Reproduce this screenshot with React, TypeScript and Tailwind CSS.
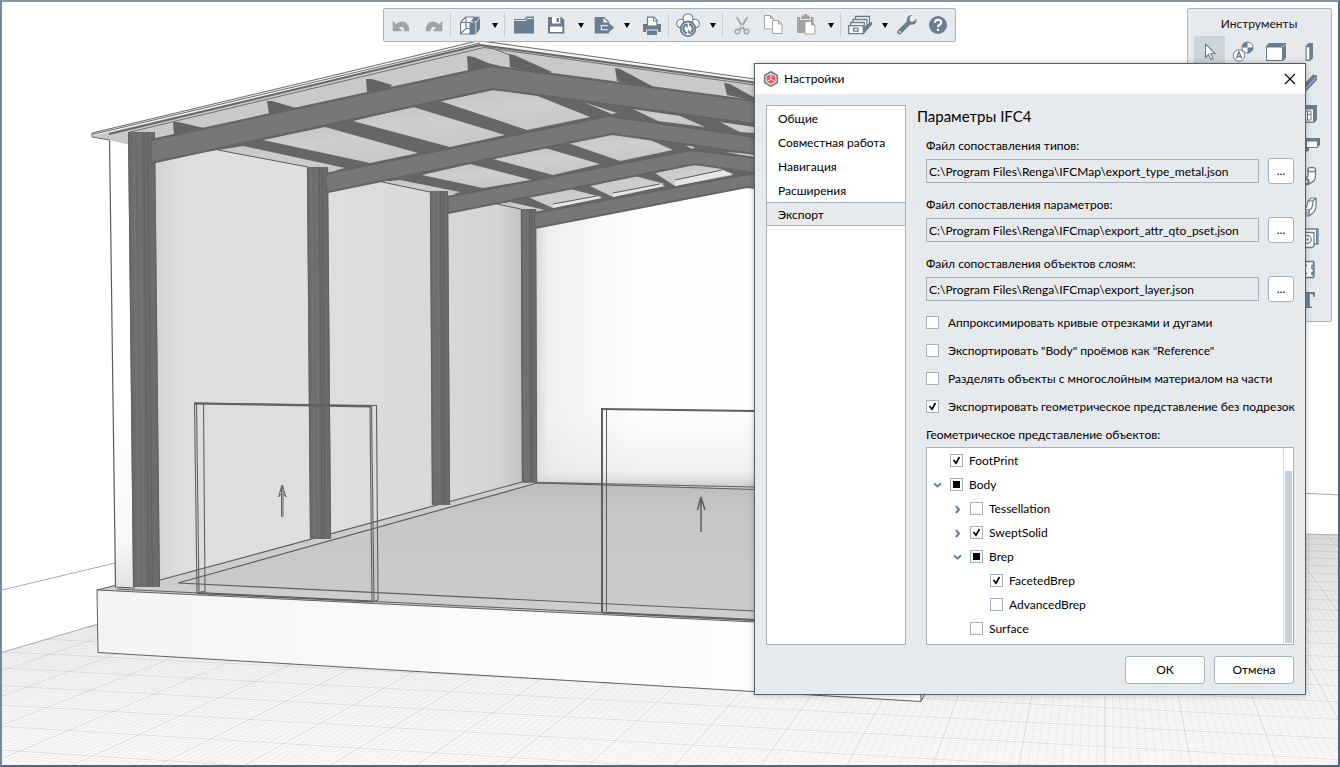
import { useEffect, useRef, useState } from "react";
import type { ReactNode } from "react";

const BLUE = "#697d90";
const GRAY = "#a3a3a3";

/* ---------- 3D viewport ---------- */

const line = (x1: number, y1: number, x2: number, y2: number) => `M${x1} ${y1}L${x2} ${y2}`;

function gridPaths() {
  let minor = "";
  let major = "";
  for (let k = -240; k <= 60; k++) {
    const seg = line(1105, 290, 1105 + k * 8.6 * 1.2, 860);
    if (k % 10 === 0) major += seg;
    else minor += seg;
  }
  for (let n = -30; n <= 235; n++) {
    const y0 = 290 + 1 / (0.002174 + n * 0.0000118);
    const slope = (y0 - 290) / 7155;
    const seg = line(0, y0, 1340, y0 + slope * 1340);
    if (n % 10 === 0) major += seg;
    else minor += seg;
  }
  return { minor, major };
}

const ROOF_PANELS = [
  "218,150 243,146 345,168 328,172 327,167 308,167",
  "263,140 325,127 418,153 370,163",
  "353,121 413,107 505,135 450,147",
  "440,101 493,90 535,95 590,117 527,130",
  "583,102 617,113 612,114",
  "633,109 680,116 705,127 658,121",
  "720,122 754,127 754,133 740,132",
  "382,182 400,180 460,192 450,195 447,192 430,192",
  "422,175 470,164 532,180 483,188",
  "493,159 545,148 600,164 553,175",
  "568,143 612,134 648,139 673,150 620,161",
  "685,145 695,147 692,149",
  "725,152 754,154 754,157 748,156",
  "497,204 510,202 545,210 536,213 534,209 520,209",
  "528,197 570,189 602,197 553,208",
  "590,186 635,176 665,184 613,197",
  "655,173 693,165 717,167 733,175 675,186",
];

const SKYLIGHTS = [
  "553,204 597,196 602,198 553,208",
  "613,193 660,184 665,186 613,197",
  "675,180 722,170 733,174 675,186",
];

const PURLIN_ENDS = [
  "173,122 178,122 204,128 200,133 174,135",
  "267,101 272,101 296,108 290,112 269,114",
  "366,79 372,79 392,85 388,90 367,92",
  "467,56 474,57 488,63 500,66 486,70 468,70",
  "509,54 514,55 552,72 546,74 510,67",
  "615,68 620,69 652,86 646,88 617,81",
  "724,83 730,84 755,98 755,101 727,95",
];

const FRAMES = [
  { shape: "534,213 755,173 755,188 747,187 535,228", top: "534,213 755,173", bottom: "535,228 747,187 755,188" },
  { shape: "447,197 692,150 755,158 755,173 695,164 448,213", top: "447,197 692,150 755,158", bottom: "448,213 695,164 755,173" },
  { shape: "325,174 608,116 755,137 755,154 612,134 328,192", top: "325,174 608,116 755,137", bottom: "328,192 612,134 755,154" },
  { shape: "151,140 492,66 755,101 755,124 493,89 151,163", top: "151,140 492,66 755,101", bottom: "151,163 493,89 755,124" },
];

function Column({ top, left, right, bottom, bl, br }: { top: number; left: number; right: number; bottom: number; bl: number; br: number }) {
  const at = (t: number) => [left + (right - left) * t, bl + (br - bl) * t];
  return (
    <g>
      <polygon points={`${left},${top} ${right},${top} ${br},${bottom} ${bl},${bottom}`} fill="#6c6c6c" />
      {[0.22, 0.42].map((t) => {
        const [a, b] = at(t);
        return <path key={t} d={line(a, top + 2, b, bottom - 3)} stroke="#737373" strokeWidth={2} />;
      })}
      {[0.02, 0.58, 0.72, 0.98].map((t) => {
        const [a, b] = at(t);
        return <path key={t} d={line(a, top, b, bottom)} stroke="#606060" strokeWidth={1} />;
      })}
    </g>
  );
}

function Scene() {
  const { minor, major } = gridPaths();
  return (
    <svg className="absolute -top-0.5 -left-0.5" width="1340" height="767" viewBox="0 0 1340 767" fill="none" aria-hidden="true">
      <defs>
        <clipPath id="ground"><polygon points="0,653 400,535 1340,535 1340,767 0,767" /></clipPath>
        <linearGradient id="groundFill" x1="0" y1="535" x2="0" y2="767" gradientUnits="userSpaceOnUse">
          <stop offset="0" stopColor="#ececec" /><stop offset="0.5" stopColor="#f7f7f7" /><stop offset="1" stopColor="#fcfcfc" />
        </linearGradient>
        <linearGradient id="sideWall" x1="157" y1="0" x2="530" y2="0" gradientUnits="userSpaceOnUse">
          <stop offset="0" stopColor="#d4d4d4" /><stop offset="0.06" stopColor="#dedede" /><stop offset="0.4" stopColor="#dfdfdf" />
          <stop offset="0.75" stopColor="#d9d9d9" /><stop offset="0.92" stopColor="#d3d3d3" /><stop offset="1" stopColor="#bcbcbc" />
        </linearGradient>
        <linearGradient id="backWall" x1="536" y1="0" x2="640" y2="0" gradientUnits="userSpaceOnUse">
          <stop offset="0" stopColor="#d8d8d8" /><stop offset="0.12" stopColor="#f1f1f1" /><stop offset="1" stopColor="#fefefe" />
        </linearGradient>
        <linearGradient id="backShade" x1="0" y1="410" x2="0" y2="487" gradientUnits="userSpaceOnUse">
          <stop offset="0" stopColor="#e8e8e8" stopOpacity="0" /><stop offset="0.8" stopColor="#e2e2e2" stopOpacity="0.5" /><stop offset="1" stopColor="#cccccc" />
        </linearGradient>
        <linearGradient id="floor" x1="0" y1="483" x2="0" y2="620" gradientUnits="userSpaceOnUse">
          <stop offset="0" stopColor="#bdbdbd" /><stop offset="0.25" stopColor="#c7c7c7" /><stop offset="1" stopColor="#cbcbcb" />
        </linearGradient>
        <linearGradient id="slab" x1="97" y1="0" x2="755" y2="0" gradientUnits="userSpaceOnUse">
          <stop offset="0" stopColor="#f4f4f4" /><stop offset="0.6" stopColor="#fbfbfb" /><stop offset="1" stopColor="#fdfdfd" />
        </linearGradient>
        <linearGradient id="pier" x1="0" y1="400" x2="0" y2="588" gradientUnits="userSpaceOnUse">
          <stop offset="0" stopColor="#ffffff" /><stop offset="0.75" stopColor="#f8f8f8" /><stop offset="1" stopColor="#e2e2e2" />
        </linearGradient>
        <linearGradient id="panel" x1="0" y1="0" x2="0.3" y2="1">
          <stop offset="0" stopColor="#c4c4c4" /><stop offset="0.5" stopColor="#cecece" /><stop offset="1" stopColor="#c8c8c8" />
        </linearGradient>
      </defs>

      <rect width="1340" height="767" fill="#fff" />
      <polygon points="0,653 400,535 1340,535 1340,767 0,767" fill="url(#groundFill)" />
      <g clipPath="url(#ground)">
        <path d={minor} stroke="#000" strokeOpacity="0.045" />
        <path d={major} stroke="#000" strokeOpacity="0.11" />
      </g>
      <path d="M0 590.5L115 563M0 653L98 624M1300 493L1340 495M1300 534L1340 535" stroke="#a8a8a8" />

      <polygon points="534,228 755,186 755,490 533,484" fill="url(#backWall)" />
      <polygon points="534,410 755,410 755,490 533,484" fill="url(#backShade)" />
      <polygon points="155,150 218,149 536,209 534,484 160,582" fill="url(#sideWall)" />
      <polygon points="97,590 115,585 162,579 522,482 755,487 755,622" fill="#cdcdcd" />
      <polygon points="178,583 537,483 755,489 755,611" fill="url(#floor)" />
      <path d="M160 580L522 482L755 487M178 583L537 483L755 489.500M178 583L755 611" stroke="#5f5f5f" strokeWidth="1.200" />

      <polygon points="97,590 755,622 921,630 921,701 98,652" fill="url(#slab)" />
      <path d="M97 590L755 622M117 589L755 620M97 590L98 652.500L921 701.500L926 692M97 590L117 585M921 690V701" stroke="#606060" />
      <polygon points="109,138 130,132 134,588 115,587" fill="url(#pier)" />
      <path d="M109.500 138L115.500 587L135 588" stroke="#5c5c5c" strokeWidth="1.200" />

      <polygon points="92,134 480,44 755,82 755,110 492,75 151,150 109,140 92,137" fill="#c9c9c9" />
      <polygon points="151,160 492,84 755,120 755,180 534,222 534,209 448,193 328,169 218,150" fill="#666" />
      {ROOF_PANELS.map((p) => <polygon key={p} points={p} fill="url(#panel)" />)}
      {SKYLIGHTS.map((p) => <polygon key={p} points={p} fill="#e6e6e6" />)}
      <path d="M218 150L308 167M382 182L430 192M497 204L521 209M553 204L597 196M613 193L660 184M675 180L722 170" stroke="#5c5c5c" />

      <polygon points="92,133 475,42 485,42 755,79 755,83 482,45 92,136" fill="#f4f4f4" />
      <path d="M92 133L475 41.500H485L755 79M92 134.500L480 43" stroke="#6b6b6b" />
      <path d="M109 134L480 45L755 82.500" stroke="#666" strokeWidth="2" />
      <path d="M130 132L484 47.500L755 85M486 46L510 55" stroke="#6e6e6e" />
      <path d="M92 133V137L109 140" stroke="#6b6b6b" />

      {PURLIN_ENDS.map((p) => <polygon key={p} points={p} fill="#636363" />)}
      <Column top={209} left={521} right={536} bottom={482} bl={522} br={537} />
      <Column top={191} left={430} right={448} bottom={505} bl={432} br={450} />
      <Column top={167} left={307} right={328} bottom={539} bl={310} br={331} />
      <Column top={132} left={128} right={155} bottom={587} bl={133} br={160} />
      {FRAMES.map((f) => (
        <g key={f.shape}>
          <polygon points={f.shape} fill="#777" />
          <polyline points={f.top} stroke="#646464" strokeWidth="2" />
          <polyline points={f.bottom} stroke="#646464" strokeWidth="2" />
        </g>
      ))}
      <path d="M151 140V163M326 174V192M448 197V213M534.500 213V228" stroke="#5e5e5e" />

      <g stroke="#5f5f5f">
        <path d="M194.500 403L197 593M196.500 403L199 593M203.500 404L205 592M370 406L372 602M371.500 406L374 602M376.500 405L378 600M194 403L377 405.500" strokeWidth="1.100" />
        <path d="M194 403.500L371 406.500M197 593L373 601.500" strokeWidth="2" />
        <path d="M197 593L205 591M372 602L378 600" />
        <path d="M602 409V613" strokeWidth="2" />
        <path d="M606.500 409V611" />
        <path d="M601 409L755 411" strokeWidth="2" />
        <path d="M602 612.500L755 620" strokeWidth="2" />
        <path d="M281.500 486V517M283 486V517M282 485L278.500 497L281 494M282 485L286 497L283.500 494" />
        <path d="M701 532V497L697.500 510M701 497L705 510" strokeWidth="1.500" />
      </g>
    </svg>
  );
}

/* ---------- Icons ---------- */

function Icon({ children }: { children: ReactNode }) {
  return <svg width="24" height="24" viewBox="0 0 24 24" fill="none" aria-hidden="true">{children}</svg>;
}

const undoIcon = <Icon><path fill={GRAY} d="M2.700 8L6 11.200C11 6.500 19.300 7 19.300 18.300h-5c.3-4.500-2.800-5.600-5.300-3.600l3.300 3.600H2.700z" /></Icon>;
const redoIcon = <Icon><path fill={GRAY} d="M20.300 8L17 11.200C12 6.500 3.700 7 3.700 18.300h5c-.3-4.500 2.800-5.600 5.300-3.600l-3.300 3.600h9.600z" /></Icon>;
const boxIcon = (
  <Icon>
    <path fill="#fff" stroke={BLUE} strokeWidth="1.200" d="M2.600 9.500l5-5.500h8v12l-4 5h-9z" />
    <path stroke={BLUE} strokeWidth="1.200" d="M2.600 9.500h10M8 4v11.500M2.600 20.500l5.400-5h4" />
    <path fill={BLUE} d="M11.500 9.500h6V21.500h-6zM18.300 9.300L22 5v11l-3.700 5zM12.500 8.500l4-4.700h5.500l-3.800 4.700z" />
  </Icon>
);
const folderIcon = <Icon><path fill={BLUE} d="M2 6h10l2.500-2.500H22V20.500H2z" /><path stroke="#e6eaed" d="M2.500 7.500h10.500l2.500-2H21" /></Icon>;
const saveIcon = (
  <Icon>
    <path fill={BLUE} d="M4 4h13.500L20.300 7v13.500H4z" /><path fill="#fff" d="M8 4h8.300v6.500H8zM6 13.500h12.300v5.500H6z" /><path fill={BLUE} d="M12.500 5H15v4h-2.500z" />
  </Icon>
);
const exportIcon = (
  <Icon>
    <path fill={BLUE} d="M2.700 4h9.500l5 5v3.500H8.800v4.200H17v3.800H2.700z" /><path fill="#fff" d="M11.500 5v4.500H16z" />
    <path fill={BLUE} d="M10 13.300h6.500V9.800l5.700 4.800-5.700 4.900v-3.500H10z" />
    <path stroke="#e6eaed" d="M8.500 12.400h7.300M8.500 16.800h7.300" />
  </Icon>
);
const printIcon = (
  <Icon>
    <path fill={BLUE} d="M3 11h18v8H3zM7 17h10v5H7z" />
    <path fill="#fff" stroke={BLUE} strokeWidth="1.200" d="M7.500 4.200h6.500l3 3v5.800h-9.500z" />
    <path stroke={BLUE} d="M13.500 4.500v3.500H17" /><path stroke="#e6eaed" d="M6.500 22v-5h11v5" />
  </Icon>
);
const cloudIcon = (
  <Icon>
    <g fill="#fff" stroke={BLUE} strokeWidth="1.100"><circle cx="5" cy="10.500" r="4.300" /><circle cx="19" cy="10.500" r="4.300" /><circle cx="12" cy="5.700" r="5" /></g>
    <circle cx="12" cy="15.800" r="7.300" fill="#fff" stroke={BLUE} strokeWidth="1.800" />
    <path stroke={BLUE} strokeWidth="2.200" d="M11 20.300A4.700 4.700 0 0 1 9 12.200M13 11.200a4.700 4.700 0 0 1 2.300 8" />
    <path fill={BLUE} d="M7.500 10.800h4.300v4.300zM16.500 20.800h-4.300v-4.300z" />
  </Icon>
);
const cutIcon = (
  <Icon>
    <path fill={GRAY} d="M5.500 3.500L8 4.500l7 11.500-2 1zM18.500 3.500L16 4.500 9 16l2 1z" />
    <circle cx="7.500" cy="18.500" r="2.300" stroke={GRAY} strokeWidth="1.500" /><circle cx="16.500" cy="18.500" r="2.300" stroke={GRAY} strokeWidth="1.500" />
  </Icon>
);
const copyIcon = (
  <Icon>
    <g fill="#fff" stroke={GRAY}>
      <path d="M2.500 2.500h6l3 3v10.500h-9zM8.500 2.500v3h3" />
      <path d="M10.500 7.500h6l3.500 3.500v9.500h-9.500zM16.500 7.500v3.500h3.500" />
    </g>
  </Icon>
);
const pasteIcon = (
  <Icon>
    <path fill={GRAY} d="M3 4h4.500V2.500h2.500V1h3v1.500h2.500V4H19.500v16H3z" /><path stroke="#e6eaed" d="M6.500 4v2.500h10V4" />
    <path fill="#fff" stroke={GRAY} d="M11 8.500h6.500l3.500 3.500v9H11zM17.500 8.500V12H21" />
  </Icon>
);
const drawersIcon = (
  <Icon>
    <path fill={BLUE} d="M15.500 21.500l8.500-10v-3l-8.500 6z" />
    <g fill="#fff" stroke={BLUE} strokeWidth="1.300">
      <path d="M7.500 9.500v-6H21.500v7l-3 2z" /><path d="M5 11.500v-5h14v6l-3 2z" /><path d="M2.700 13v-3.500h13.600v5z" /><path d="M.7 12.700h14.600v8H.7z" />
    </g>
    <path stroke={BLUE} strokeWidth="1.300" d="M5.500 15.200h4.500v3H5.500z" />
  </Icon>
);
const wrenchIcon = (
  <Icon>
    <path fill={BLUE} d="M19.200 7.200l-3.300 2-2.500-2 .5-3.500L16.500 2C13 1.500 10 4.500 11 8.200L1.800 17.400a2.300 2.300 0 0 0 3.300 3.300L14.300 11.500c4 1 7-2 6.200-6.300z" /><circle cx="3.800" cy="19" r="1" fill="#e6eaed" />
  </Icon>
);
const helpIcon = (
  <Icon>
    <circle cx="12" cy="12" r="9" fill={BLUE} />
    <path stroke="#fff" strokeWidth="2.200" d="M8.800 10c0-4.200 6.400-4 6.400-.6 0 2.200-3.200 2.200-3.200 4.800" /><path fill="#fff" d="M10.900 15.700h2.200V18h-2.200z" />
  </Icon>
);

const pointerIcon = <Icon><path fill="#fff" stroke={BLUE} strokeWidth="1.100" d="M7.500 4v13.500l3-3 2.300 5 2.200-1-2.300-5H17z" /></Icon>;
const axisIcon = (
  <Icon>
    <circle cx="16.500" cy="7.500" r="5.500" fill="#fff" stroke={BLUE} /><path fill={BLUE} d="M16.500 2v5.500H11A5.500 5.500 0 0 1 16.500 2zM16.500 13V7.500H22a5.500 5.500 0 0 1-5.500 5.500z" />
    <circle cx="8" cy="15.500" r="5.800" fill="#fff" stroke={BLUE} /><path stroke={BLUE} strokeWidth="1.300" d="M5.300 18.500L8 12l2.700 6.500M6.200 16.500h3.600" />
  </Icon>
);
const wallIcon = <Icon><path fill={BLUE} d="M2 6l3-3h17v15l-3 3H2z" /><path fill="#fff" d="M3 7.500h15V20H3z" /><path stroke="#fff" strokeWidth=".7" d="M18.500 7L21.500 4" /></Icon>;
const columnIcon = <Icon><path fill={BLUE} d="M8.500 6l3-3H16v15l-3 3H8.500z" /><path fill="#fff" d="M9.700 7.300h2.600v12.200H9.700z" /></Icon>;
const beamIcon = <Icon><path fill={BLUE} d="M4 16L16 3.500l4 1v4.500L8 21.500z" /><path stroke="#fff" strokeWidth=".6" d="M7 19.500L19 6.500" /></Icon>;
const windowIcon = <Icon><path fill={BLUE} d="M3 6l3-3h14v15l-3 3H3z" /><path fill="#fff" d="M4 7.500h12V19.500H4z" /><path stroke={BLUE} d="M6.500 9h7.500v9H6.500zM10.500 9v9M10.500 12.500H14" /></Icon>;
const plateIcon = <Icon><path fill={BLUE} d="M5 8l3-3h15v7l-3 3h-8v3l-4 1H5z" /><path fill="#fff" d="M10 8.500h10v5.500H10z" /></Icon>;
const pipeIcon = (
  <Icon>
    <g fill="#fff" stroke={BLUE} strokeWidth="1.300"><path d="M11 6v5c0 2-2 3-5 3v7c7 0 12.500-4 12.500-9V6z" /><ellipse cx="14.700" cy="5.500" rx="3.800" ry="2.200" /></g>
    <circle cx="9" cy="17.500" r="3.500" fill={BLUE} /><circle cx="9" cy="17.500" r="1.500" fill="#fff" />
  </Icon>
);
const ductIcon = (
  <Icon>
    <g fill="#fff" stroke={BLUE} strokeWidth="1.200"><path d="M5 15c4 0 5-3 6-9l3-3h5v8c0 5-3 7-7 10H5zM11 6h5l3-3M16 6c0 5-1 8-4 9v6M5 15h7" /></g>
    <path stroke={BLUE} d="M6.500 17h3.500v3H6.500z" />
  </Icon>
);
const outletIcon = (
  <Icon>
    <path fill="#fff" stroke={BLUE} strokeWidth="1.300" d="M8 9V3h13v15h-6" /><path stroke={BLUE} strokeWidth="1.500" d="M19.700 4v14" />
    <path fill="#fff" stroke={BLUE} strokeWidth="1.300" d="M4 6.500h13V20L15 21.500H4z" /><circle cx="10.500" cy="13.500" r="3.800" stroke={BLUE} strokeWidth="1.200" /><circle cx="10.500" cy="13.500" r="1.200" fill={BLUE} />
  </Icon>
);
const circuitIcon = (
  <Icon>
    <path fill="#fff" stroke={BLUE} strokeWidth="1.500" d="M6 4.500h10.500v4H15v3h1.500v4H15v2h1.500v3H6z" /><path stroke={BLUE} strokeWidth="1.300" d="M17 5v15M7.500 8.500H10M7.500 16.500H10" />
  </Icon>
);
const textIcon = <Icon><path fill={BLUE} d="M4 4h14v5h-1.300c-.4-2.300-1-3.300-3.900-3.300V17c0 1.300.5 1.700 2.200 1.800V20H7v-1.200c1.700-.1 2.200-.5 2.200-1.800V5.700C6.300 5.700 5.700 6.700 5.300 9H4z" /></Icon>;

/* ---------- Toolbars ---------- */

function ToolButton({ label, icon, narrow }: { label: string; icon: ReactNode; narrow?: boolean }) {
  return (
    <button type="button" aria-label={label} className={narrow ? "flex h-8 w-7 items-center justify-center" : "flex h-8 w-8 items-center justify-center"}>
      {icon}
    </button>
  );
}

function DropButton({ label }: { label: string }) {
  return (
    <button type="button" aria-label={label} className="flex h-8 w-[18px] items-center justify-center">
      <svg width="6" height="6" viewBox="0 0 6 6" aria-hidden="true"><path d="M0 1h6L3 6z" fill="#000" /></svg>
    </button>
  );
}

const Divider = () => <span className="mr-[3px] h-6 w-px bg-[#c9d1d8]" />;

function MainToolbar() {
  return (
    <header className="absolute top-1.5 left-[381px] flex items-center rounded-xs border border-[#a5b3c1] bg-[#e6eaed] pr-px pl-0.5">
      <ToolButton label="Отменить" icon={undoIcon} />
      <ToolButton label="Повторить" icon={redoIcon} />
      <Divider />
      <ToolButton label="Вид" icon={boxIcon} />
      <DropButton label="Варианты вида" />
      <Divider />
      <ToolButton label="Открыть" icon={folderIcon} />
      <ToolButton label="Сохранить" icon={saveIcon} />
      <DropButton label="Варианты сохранения" />
      <ToolButton label="Экспорт" icon={exportIcon} narrow />
      <DropButton label="Варианты экспорта" />
      <ToolButton label="Печать" icon={printIcon} />
      <Divider />
      <ToolButton label="Совместная работа" icon={cloudIcon} />
      <DropButton label="Варианты совместной работы" />
      <Divider />
      <ToolButton label="Вырезать" icon={cutIcon} />
      <ToolButton label="Копировать" icon={copyIcon} />
      <ToolButton label="Вставить" icon={pasteIcon} />
      <DropButton label="Варианты вставки" />
      <Divider />
      <ToolButton label="Стили" icon={drawersIcon} />
      <DropButton label="Варианты стилей" />
      <ToolButton label="Настройки" icon={wrenchIcon} narrow />
      <ToolButton label="Справка" icon={helpIcon} />
    </header>
  );
}

const EDGE_TOOLS: [string, ReactNode][] = [
  ["Балка", beamIcon],
  ["Окно", windowIcon],
  ["Пластина", plateIcon],
  ["Труба", pipeIcon],
  ["Воздуховод", ductIcon],
  ["Розетка", outletIcon],
  ["Цепь", circuitIcon],
  ["Текст", textIcon],
];

function ToolsPanel() {
  const cell = "flex h-[31px] w-[31px] items-center justify-center";
  return (
    <aside className="absolute top-1.5 right-1.5 rounded-xs border border-[#a5b3c1] bg-[#e6eaed] pr-[7px] pb-1.5 pl-1.5">
      <h2 className="pt-[5px] pb-0.5 text-center text-xs leading-5 text-[#111]">Инструменты</h2>
      <div className="grid grid-cols-4 gap-x-0.5">
        <button type="button" aria-label="Выбор" className={`${cell} bg-[#cdd5dc]`}>{pointerIcon}</button>
        <button type="button" aria-label="Ось" className={cell}>{axisIcon}</button>
        <button type="button" aria-label="Стена" className={cell}>{wallIcon}</button>
        <button type="button" aria-label="Колонна" className={cell}>{columnIcon}</button>
        {EDGE_TOOLS.map(([name, icon]) => (
          <button key={name} type="button" aria-label={name} className={`${cell} col-start-4`}>{icon}</button>
        ))}
      </div>
    </aside>
  );
}

/* ---------- Settings dialog ---------- */

type Mark = "on" | "off" | "mixed";

function CheckBox({ label, initial, gap }: { label: string; initial: Mark; gap: string }) {
  const [mark, setMark] = useState<Mark>(initial);
  const ref = useRef<HTMLInputElement>(null);
  useEffect(() => {
    if (ref.current) ref.current.indeterminate = mark === "mixed";
  }, [mark]);
  return (
    <label className={`flex items-center whitespace-nowrap ${gap}`}>
      <span className="relative mb-px flex size-[13px] shrink-0">
        <input
          ref={ref}
          type="checkbox"
          checked={mark === "on"}
          onChange={() => setMark(mark === "on" ? "off" : "on")}
          className="size-[13px] appearance-none border border-[#a5b1be] bg-white"
        />
        {mark !== "off" && (
          <svg className="pointer-events-none absolute inset-0" width="13" height="13" viewBox="0 0 13 13" fill="none" aria-hidden="true">
            {mark === "on" ? <path d="M3.500 6L6 9.200L9.500 3" stroke="#000" strokeWidth="1.600" /> : <path d="M3 3h7v7H3z" fill="#000" />}
          </svg>
        )}
      </span>
      {label}
    </label>
  );
}

const FILES = [
  ["types", "Файл сопоставления типов:", "C:\\Program Files\\Renga\\IFCMap\\export_type_metal.json"],
  ["params", "Файл сопоставления параметров:", "C:\\Program Files\\Renga\\IFCmap\\export_attr_qto_pset.json"],
  ["layers", "Файл сопоставления объектов слоям:", "C:\\Program Files\\Renga\\IFCmap\\export_layer.json"],
];

const OPTIONS: [string, Mark][] = [
  ["Аппроксимировать кривые отрезками и дугами", "off"],
  ["Экспортировать \"Body\" проёмов как \"Reference\"", "off"],
  ["Разделять объекты с многослойным материалом на части", "off"],
  ["Экспортировать геометрическое представление без подрезок", "on"],
];

const TREE: { name: string; mark: Mark; indent: string; arrow?: "open" | "closed" }[] = [
  { name: "FootPrint", mark: "on", indent: "pl-0" },
  { name: "Body", mark: "mixed", indent: "pl-0", arrow: "open" },
  { name: "Tessellation", mark: "off", indent: "pl-5", arrow: "closed" },
  { name: "SweptSolid", mark: "on", indent: "pl-5", arrow: "closed" },
  { name: "Brep", mark: "mixed", indent: "pl-5", arrow: "open" },
  { name: "FacetedBrep", mark: "on", indent: "pl-10" },
  { name: "AdvancedBrep", mark: "off", indent: "pl-10" },
  { name: "Surface", mark: "off", indent: "pl-5" },
];

const SECTIONS = ["Общие", "Совместная работа", "Навигация", "Расширения", "Экспорт"];

function SettingsDialog() {
  const [section, setSection] = useState("Экспорт");
  const button = "rounded-[3px] border border-[#a5b1be] bg-white text-center";
  return (
    <section role="dialog" aria-label="Настройки" className="absolute top-[61px] right-8 w-[552px] border border-[#5b5f63] bg-[#e6eaed] text-xs text-black shadow-[0_0_6px_rgba(0,0,0,0.25)]">
      <div className="flex h-[30px] items-center bg-white px-2">
        <svg width="16" height="16" viewBox="0 0 16 16" fill="none" aria-hidden="true">
          <path d="M8 .8l6.300 3.600v7.200L8 15.200l-6.300-3.600V4.400z" fill="#f4dede" stroke="#6d8091" strokeWidth="1.700" />
          <path d="M8 3.200l4.300 2.400v4.800L8 12.800l-4.300-2.400V5.600z" fill="#f2545b" />
          <path d="M8 3.500V8M8 8l-3.800 2.400M8 8l3.800 2.400" stroke="#fff" strokeWidth=".9" />
        </svg>
        <h1 className="ml-[5px] text-xs">Настройки</h1>
        <button type="button" aria-label="Закрыть" className="ml-auto p-px">
          <svg width="12" height="12" viewBox="0 0 12 12" aria-hidden="true"><path d="M1 1l10 10M11 1L1 11" stroke="#000" strokeWidth="1.100" /></svg>
        </button>
      </div>

      <div className="flex gap-[11px] px-[11px] pt-[11px]">
        <nav className="w-[140px] shrink-0 border border-[#a5b1be] bg-white">
          {SECTIONS.map((s) => (
            <button
              key={s}
              type="button"
              onClick={() => setSection(s)}
              className={
                s === section
                  ? "block h-6 w-full border-y border-[#a5b1be] bg-[#e6eaed] pt-px pl-[11px] text-left whitespace-nowrap"
                  : "block h-6 w-full border-y border-transparent pt-px pl-[11px] text-left whitespace-nowrap"
              }
            >
              {s}
            </button>
          ))}
        </nav>

        <div className="min-w-0 flex-1">
          <h2 className="text-[15px] leading-[22px]">Параметры IFC4</h2>
          <div className="mt-[9px] ml-[9px]">
            <div className="flex flex-col gap-[11px]">
              {FILES.map(([id, label, path]) => (
                <div key={id}>
                  <label htmlFor={id} className="block leading-5">{label}</label>
                  <div className="mt-0.5 flex items-center gap-[9px]">
                    <input id={id} readOnly value={path} className="h-6 min-w-0 flex-1 border border-[#a5b1be] bg-[#e6eaed] px-0.5 outline-none" />
                    <button type="button" aria-label="Выбрать файл" className={`${button} h-[26px] w-[26px]`}>...</button>
                  </div>
                </div>
              ))}
            </div>

            <div className="mt-[11px] flex flex-col gap-2 leading-5">
              {OPTIONS.map(([label, mark]) => <CheckBox key={label} label={label} initial={mark} gap="gap-[9px]" />)}
            </div>

            <h3 className="mt-2 leading-5">Геометрическое представление объектов:</h3>
            <div className="mt-0.5 flex border border-[#a5b1be] bg-white">
              <ul className="flex-1 pt-px pb-[3px]">
                {TREE.map((n) => (
                  <li key={n.name} className={`flex h-6 items-center ${n.indent}`}>
                    <span className="flex w-[23px] justify-center pr-[3px]">
                      {n.arrow && (
                        <button type="button" aria-label={n.name}>
                          <svg width="9" height="9" viewBox="0 0 9 9" fill="none" stroke={BLUE} strokeWidth="2" aria-hidden="true">
                            <path d={n.arrow === "open" ? "M1 2.500L4.500 5.500L8 2.500" : "M3 1L6 4.500L3 8"} />
                          </svg>
                        </button>
                      )}
                    </span>
                    <CheckBox label={n.name} initial={n.mark} gap="gap-1.5" />
                  </li>
                ))}
              </ul>
              <div className="flex w-2.5 flex-col border-l border-[#d5dbe0] px-px pt-[23px] pb-px">
                <span className="flex-1 bg-[#c8d0d7]" />
              </div>
            </div>
          </div>
        </div>
      </div>

      <footer className="flex justify-end gap-[9px] px-[11px] pt-[11px] pb-2.5">
        <button type="button" className={`${button} h-7 w-20`}>ОК</button>
        <button type="button" className={`${button} h-7 w-20`}>Отмена</button>
      </footer>
    </section>
  );
}

export default function App() {
  return (
    <main className="relative h-screen overflow-hidden border-2 border-t-[#8495a5] border-r-[#52677b] border-b-[#52677b] border-l-[#74899c] bg-white font-['Lato','Noto_Sans',sans-serif]">
      <Scene />
      <MainToolbar />
      <ToolsPanel />
      <SettingsDialog />
    </main>
  );
}
